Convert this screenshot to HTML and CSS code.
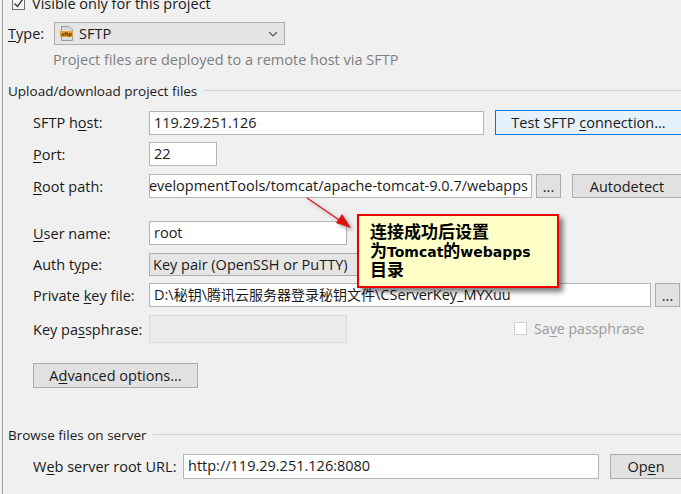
FILE: index.html
```html
<!DOCTYPE html>
<html lang="en">
<head>
  <meta charset="UTF-8">
  <link rel="stylesheet" href="styles.css">
</head>
<body>
  <div class="panel">
    <div class="visible-row">
      <span class="check"><svg width="11" height="11" viewBox="0 0 11 11"><path d="M1.5 5.5 L4.5 8.5 L9.5 1.5" fill="none" stroke="#333" stroke-width="1.3"/></svg></span>
      <span>Visible only for this project</span>
    </div>

    <div class="type-row">
      <label class="type-label"><u>T</u>ype:</label>
      <div class="combo type-combo">
        <svg class="sftp-icon" width="14" height="15" viewBox="0 0 14 15">
          <path d="M1.5 .5 H9 L12.5 4 V14.5 H1.5 Z" fill="#dcdcdc" stroke="#9a9a9a"/>
          <rect x="0" y="5" width="13" height="6" fill="#e8a33d"/>
          <text x="6.5" y="10" class="sftp-icon-text">sftp</text>
        </svg>
        <span class="combo-text">SFTP</span>
        <svg class="chevron" width="10" height="6" viewBox="0 0 10 6"><path d="M1 1 L5 5 L9 1" fill="none" stroke="#555" stroke-width="1.1"/></svg>
      </div>
    </div>
    <div class="hint">Project files are deployed to a remote host via SFTP</div>

    <div class="group-title upload-title"><span>Upload/download project files</span><i></i></div>

    <div class="row host-row">
      <label>SFTP h<u>o</u>st:</label>
      <div class="input host-input">119.29.251.126</div>
      <button class="btn btn-focus test-btn">Test SFTP <u>c</u>onnection...</button>
    </div>
    <div class="row port-row">
      <label><u>P</u>ort:</label>
      <div class="input port-input">22</div>
    </div>
    <div class="row root-row">
      <label><u>R</u>oot path:</label>
      <div class="input root-input"><span>/DevelopmentTools/tomcat/apache-tomcat-9.0.7/webapps</span></div>
      <button class="btn dots-btn">...</button>
      <button class="btn auto-btn">Autodetect</button>
    </div>
    <div class="row user-row">
      <label><u>U</u>ser name:</label>
      <div class="input user-input">root</div>
    </div>
    <div class="row auth-row">
      <label>Auth t<u>y</u>pe:</label>
      <div class="combo auth-combo">Key pair (OpenSSH or PuTTY)</div>
    </div>
    <div class="row key-row">
      <label>Private <u>k</u>ey file:</label>
      <div class="input key-input">D:\<span class="cjk">秘钥</span>\<span class="cjk">腾讯云服务器登录秘钥文件</span>\CServerKey_MYXuu</div>
      <button class="btn dots-btn">...</button>
    </div>
    <div class="row pass-row">
      <label>Key pa<u>s</u>sphrase:</label>
      <div class="input input-off pass-input"></div>
      <span class="check check-off"></span>
      <span class="off-text">Sa<u>v</u>e passphrase</span>
    </div>
    <button class="btn adv-btn">A<u>d</u>vanced options...</button>

    <div class="group-title browse-title"><span>Browse files on server</span><i></i></div>

    <div class="row url-row">
      <label>W<u>e</u>b server root URL:</label>
      <div class="input url-input">http://119.29.251.126:8080</div>
      <button class="btn open-btn">Op<u>e</u>n</button>
    </div>
  </div>

  <svg class="arrow" width="60" height="45" viewBox="0 0 60 45">
    <path d="M2 3 L40 29" stroke="#e01010" stroke-width="1.2" fill="none"/>
    <path d="M46 33 L31 28 L37 19 Z" fill="#e01010"/>
  </svg>
  <div class="note">连接成功后设置<br>为<span class="note-latin">Tomcat</span>的<span class="note-latin">webapps</span><br>目录</div>
</body>
</html>
```

FILE: styles.css
```css
html, body {
  margin: 0;
  height: 494px;
  overflow: hidden;
}
body {
  position: relative;
  width: 681px;
  background: #f0f0f0;
  color: #1a1a1a;
  font-family: "Open Sans", "Noto Sans CJK SC", sans-serif;
  font-size: 14.5px;
}
u {
  text-underline-offset: 2px;
}
.cjk {
  font-size: 14px;
}
.panel {
  margin-left: 2px;
  border-left: 1px solid #a0a0a0;
  height: 494px;
  padding-left: 5px;
  box-sizing: border-box;
  overflow: hidden;
}
.visible-row {
  display: flex;
  align-items: center;
  gap: 7px;
  height: 20px;
  margin-top: -7px;
  margin-left: 4px;
}
.check {
  width: 13px;
  height: 13px;
  border: 1px solid #707070;
  box-sizing: border-box;
  background: #f4f4f4;
  display: flex;
  align-items: center;
  justify-content: center;
}
.check-off {
  border-color: #cfcfcf;
  background: #fff;
  margin-left: 167px;
  margin-right: 7px;
  position: relative;
  top: -1px;
}
.off-text {
  color: #9a9a9a;
  font-size: 14.2px;
  margin-top: -2px;
}
.type-row {
  display: flex;
  align-items: center;
  margin-top: 9px;
}
.type-label {
  width: 46px;
}
.combo {
  height: 23px;
  border: 1px solid #adadad;
  background: #e5e5e5;
  box-sizing: border-box;
  display: flex;
  align-items: center;
  padding-left: 3px;
}
.type-combo {
  width: 231px;
  position: relative;
}
.sftp-icon {
  margin: 0 5px 0 2px;
}
.sftp-icon-text {
  font-family: "Liberation Sans", sans-serif;
  font-size: 6px;
  font-weight: bold;
  text-anchor: middle;
  fill: #3a2a10;
}
.chevron {
  position: absolute;
  right: 6px;
  top: 8px;
}
.hint {
  margin: 5px 0 0 45px;
  height: 19px;
  line-height: 19px;
  color: #7f7f7f;
}
.group-title {
  display: flex;
  align-items: center;
  gap: 6px;
  height: 18px;
  font-size: 13.5px;
}
.group-title i {
  flex: 1;
  height: 1px;
  margin-top: -1px;
  background: #d0d0d0;
}
.upload-title {
  margin-top: 13px;
}
.browse-title {
  margin-top: 38px;
}
.row {
  display: flex;
  align-items: center;
  padding-left: 25px;
}
.row label {
  width: 116px;
  flex: none;
}
.input {
  height: 24px;
  border: 1px solid #b4b4b4;
  background: #fff;
  box-sizing: border-box;
  padding-left: 4px;
  line-height: 21px;
  white-space: nowrap;
  overflow: hidden;
  flex: none;
}
.input-off {
  background: #ececec;
  border-color: #d9d9d9;
}
.btn {
  height: 25px;
  border: 1px solid #adadad;
  background: #e1e1e1;
  color: #1a1a1a;
  font: inherit;
  padding: 0;
  flex: none;
}
.btn-focus {
  border-color: #0078d7;
  background: #e5f1fb;
}
.host-row {
  margin-top: 10px;
}
.host-input {
  width: 335px;
}
.test-btn {
  width: 187px;
  margin-left: 11px;
}
.port-row {
  margin-top: 7px;
}
.port-input {
  width: 68px;
}
.root-row {
  margin-top: 8px;
}
.root-input {
  width: 383px;
  display: flex;
  justify-content: flex-end;
  padding-right: 3px;
}
.dots-btn {
  width: 25px;
  height: 24px;
  margin-left: 4px;
}
.auto-btn {
  width: 110px;
  height: 24px;
  margin-left: 11px;
}
.user-row {
  margin-top: 23px;
}
.user-input {
  width: 198px;
}
.auth-row {
  margin-top: 8px;
}
.auth-combo {
  width: 224px;
}
.key-row {
  margin-top: 7px;
}
.key-input {
  width: 502px;
}
.pass-row {
  margin-top: 8px;
}
.pass-input {
  width: 198px;
  height: 28px;
}
.adv-btn {
  display: block;
  width: 165px;
  margin: 20px 0 0 25px;
}
.url-row {
  margin-top: 10px;
}
.url-row label {
  width: 150px;
}
.url-input {
  width: 416px;
  height: 25px;
}
.open-btn {
  width: 72px;
  margin-left: 11px;
}
.note {
  position: absolute;
  left: 357px;
  top: 214px;
  width: 202px;
  height: 74px;
  box-sizing: border-box;
  border: 2px solid #f00000;
  background: #ffffc8;
  box-shadow: 4px 4px 5px rgba(0, 0, 0, .5);
  padding: 5px 0 0 11px;
  color: #000;
  font-family: "Noto Sans CJK SC", sans-serif;
  font-size: 17px;
  font-weight: bold;
  line-height: 19px;
  white-space: nowrap;
}
.note-latin {
  font-family: "DejaVu Sans", sans-serif;
  font-size: 14px;
  line-height: 1;
}
.arrow {
  position: absolute;
  left: 305px;
  top: 195px;
  filter: drop-shadow(2px 2px 2px rgba(0, 0, 0, .35));
}
```
